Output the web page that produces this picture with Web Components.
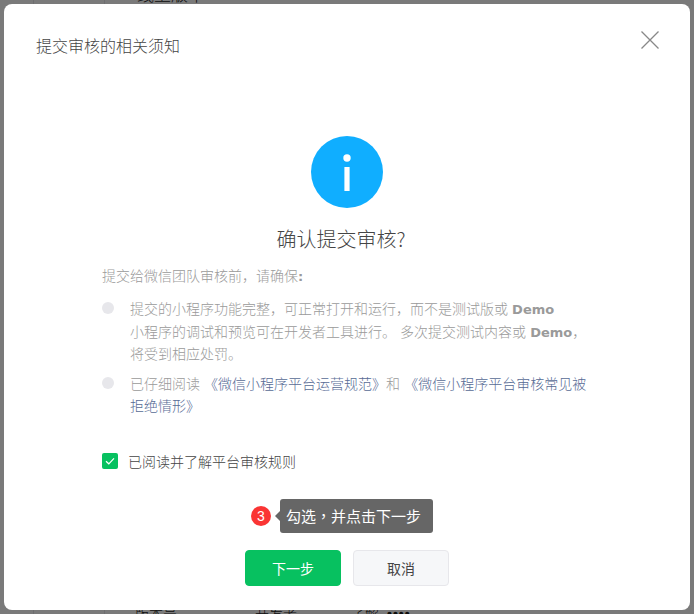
<!DOCTYPE html>
<html>
<head>
<meta charset="utf-8">
<style>
html,body{margin:0;height:100%;overflow:hidden}
body{font-family:"Noto Sans CJK SC","Liberation Sans",sans-serif;font-weight:300}
</style>
</head>
<body>
<back-page></back-page>
<review-modal heading="提交审核的相关须知">
  <review-intro title-text="确认提交审核?"></review-intro>
  <notice-list lead="提交给微信团队审核前，请确保">
    <notice-item>提交的小程序功能完整，可正常打开和运行，而不是测试版或 <b>Demo</b><br>小程序的调试和预览可在开发者工具进行。 多次提交测试内容或 <b>Demo</b>，<br>将受到相应处罚。</notice-item>
    <notice-item>已仔细阅读 <a>《微信小程序平台运营规范》</a>和 <a>《微信小程序平台审核常见被拒绝情形》</a></notice-item>
  </notice-list>
  <check-row>已阅读并了解平台审核规则</check-row>
  <step-tip step="3">勾选，并点击下一步</step-tip>
  <div slot="footer">
    <action-button kind="primary">下一步</action-button>
    <action-button>取消</action-button>
  </div>
</review-modal>
<script>
class BackPage extends HTMLElement{
    constructor(){
        super();
        this.attachShadow({mode:'open'})
        this.shadowRoot.innerHTML = `
        <style>
        :host{position:absolute;inset:0;background:#fff;overflow:hidden;color:#1a1a1a;font-size:14px;line-height:20px}
        .v{position:absolute;top:0;bottom:0;width:1px;background:#e7e7eb}
        .t{position:absolute;white-space:nowrap}
        .dots{font:bold 14px/20px "Liberation Sans",sans-serif;letter-spacing:1px}
        .dim{position:absolute;inset:0;background:rgba(0,0,0,.52)}
        </style>
        <i class="v" style="left:33px"></i>
        <i class="v" style="left:104px"></i>
        <span class="t" style="left:137px;top:-16px;font-size:17px">线上版本</span>
        <span class="t" style="left:135px;top:603px">版本号</span>
        <span class="t" style="left:255px;top:603px">开发者</span>
        <span class="t" style="left:351px;top:603px">了解</span>
        <span class="t dots" style="left:387px;top:604px">••••</span>
        <div class="dim"></div>
        `
    }
}
customElements.define('back-page', BackPage)

class ReviewModal extends HTMLElement{
    constructor(){
        super();
        this.attachShadow({mode:'open'})
        this.shadowRoot.innerHTML = `
        <style>
        :host{position:absolute;left:4px;top:4px;width:686px;height:606px;background:#fff;border-radius:8px;display:flex;flex-direction:column;box-sizing:border-box}
        header{display:flex;justify-content:space-between;padding:29px 31px 0 32px;height:67px;box-sizing:border-box}
        h2{margin:0;font-size:16px;line-height:24px;font-weight:300;color:#444}
        svg{display:block}
        main{flex:1;padding:65px 98px 0;display:flex;flex-direction:column}
        footer{padding-bottom:24px}
        </style>
        <header><h2></h2>
          <svg width="18" height="18" viewBox="0 0 18 18" style="margin-top:-2px"><path d="M.5.5l17 17M17.5.5l-17 17" stroke="#888" stroke-width="1.3" fill="none"/></svg>
        </header>
        <main><slot></slot></main>
        <footer><slot name="footer"></slot></footer>
        `
        this.shadowRoot.querySelector('h2').textContent = this.getAttribute('heading')
    }
}
customElements.define('review-modal', ReviewModal)

class ReviewIntro extends HTMLElement{
    constructor(){
        super();
        this.attachShadow({mode:'open'})
        this.shadowRoot.innerHTML = `
        <style>
        :host{display:flex;flex-direction:column;align-items:center}
        svg{display:block}
        h3{margin:17px 12px 0 0;font-size:20px;line-height:28px;font-weight:300;color:#444}
        </style>
        <svg width="72" height="72" viewBox="0 0 72 72"><circle cx="36" cy="36" r="36" fill="#10aeff"/><circle cx="36" cy="22" r="3.7" fill="#fff"/><rect x="33.4" y="31" width="5.2" height="24" fill="#fff"/></svg>
        <h3></h3>
        `
        this.shadowRoot.querySelector('h3').textContent = this.getAttribute('title-text')
    }
}
customElements.define('review-intro', ReviewIntro)

class NoticeList extends HTMLElement{
    constructor(){
        super();
        this.attachShadow({mode:'open'})
        this.shadowRoot.innerHTML = `
        <style>
        :host{display:block;margin-top:11px;font-size:14px;line-height:22.4px;color:#9a9a9a;word-spacing:1px}
        p{margin:0 0 11px}
        b{font:bold 13px "DejaVu Sans",sans-serif}
        .items{display:flex;flex-direction:column;gap:7px}
        </style>
        <p><span></span><b>:</b></p>
        <div class="items"><slot></slot></div>
        `
        this.shadowRoot.querySelector('span').textContent = this.getAttribute('lead')
    }
}
customElements.define('notice-list', NoticeList)

class NoticeItem extends HTMLElement{
    constructor(){
        super();
        this.attachShadow({mode:'open'})
        this.shadowRoot.innerHTML = `
        <style>
        :host{display:block;position:relative;padding-left:28px}
        i{position:absolute;left:0;top:5px;width:12px;height:12px;border-radius:50%;background:#e7e7eb}
        ::slotted(a){color:#576b95}
        ::slotted(b){font:bold 13px "DejaVu Sans",sans-serif;color:#9a9a9a}
        </style>
        <i></i><slot></slot>
        `
    }
}
customElements.define('notice-item', NoticeItem)

class CheckRow extends HTMLElement{
    constructor(){
        super();
        this.attachShadow({mode:'open'})
        this.shadowRoot.innerHTML = `
        <style>
        :host{display:flex;align-items:center;gap:10px;margin-top:34px;font-size:14px;line-height:22px;color:#444}
        svg{display:block}
        </style>
        <svg width="16" height="16" viewBox="0 0 16 16"><rect width="16" height="16" rx="2" fill="#07c160"/><path d="M4 8.2l2.8 2.6L12 5.4" stroke="#fff" stroke-width="1.2" fill="none"/></svg>
        <slot></slot>
        `
    }
}
customElements.define('check-row', CheckRow)

class StepTip extends HTMLElement{
    constructor(){
        super();
        this.attachShadow({mode:'open'})
        this.shadowRoot.innerHTML = `
        <style>
        :host{display:flex;align-items:center;justify-content:center;margin-top:27px;gap:9px;padding-right:10px}
        .num{width:20px;height:20px;border-radius:50%;background:#fa3534;color:#fff;font:14px/20px "Liberation Sans",sans-serif;text-align:center}
        .tip{position:relative;width:153px;height:34px;box-sizing:border-box;padding-left:6px;border-radius:3px;background:#666;color:#fff;font:400 15px/33px "Noto Sans CJK TC","Noto Sans CJK SC",sans-serif;white-space:nowrap}
        .tip:before{content:"";position:absolute;left:-5px;top:12px;border:5px solid transparent;border-left:0;border-right-color:#666}
        </style>
        <span class="num"></span>
        <div class="tip"><slot></slot></div>
        `
        this.shadowRoot.querySelector('.num').textContent = this.getAttribute('step')
    }
}
customElements.define('step-tip', StepTip)

class ActionButton extends HTMLElement{
    constructor(){
        super();
        this.attachShadow({mode:'open'})
        this.shadowRoot.innerHTML = `
        <style>
        :host{display:block;width:96px;height:36px;box-sizing:border-box;border-radius:4px;font-size:14px;font-weight:400;line-height:34px;text-align:center;border:1px solid #e7e7eb;background:#f6f7f9;color:#444}
        :host([kind=primary]){background:#07c160;border-color:#07c160;color:#fff}
        </style>
        <slot></slot>
        `
    }
}
customElements.define('action-button', ActionButton)

document.querySelector('[slot=footer]').style.cssText = 'display:flex;justify-content:center;gap:12px'
</script>
</body>
</html>
